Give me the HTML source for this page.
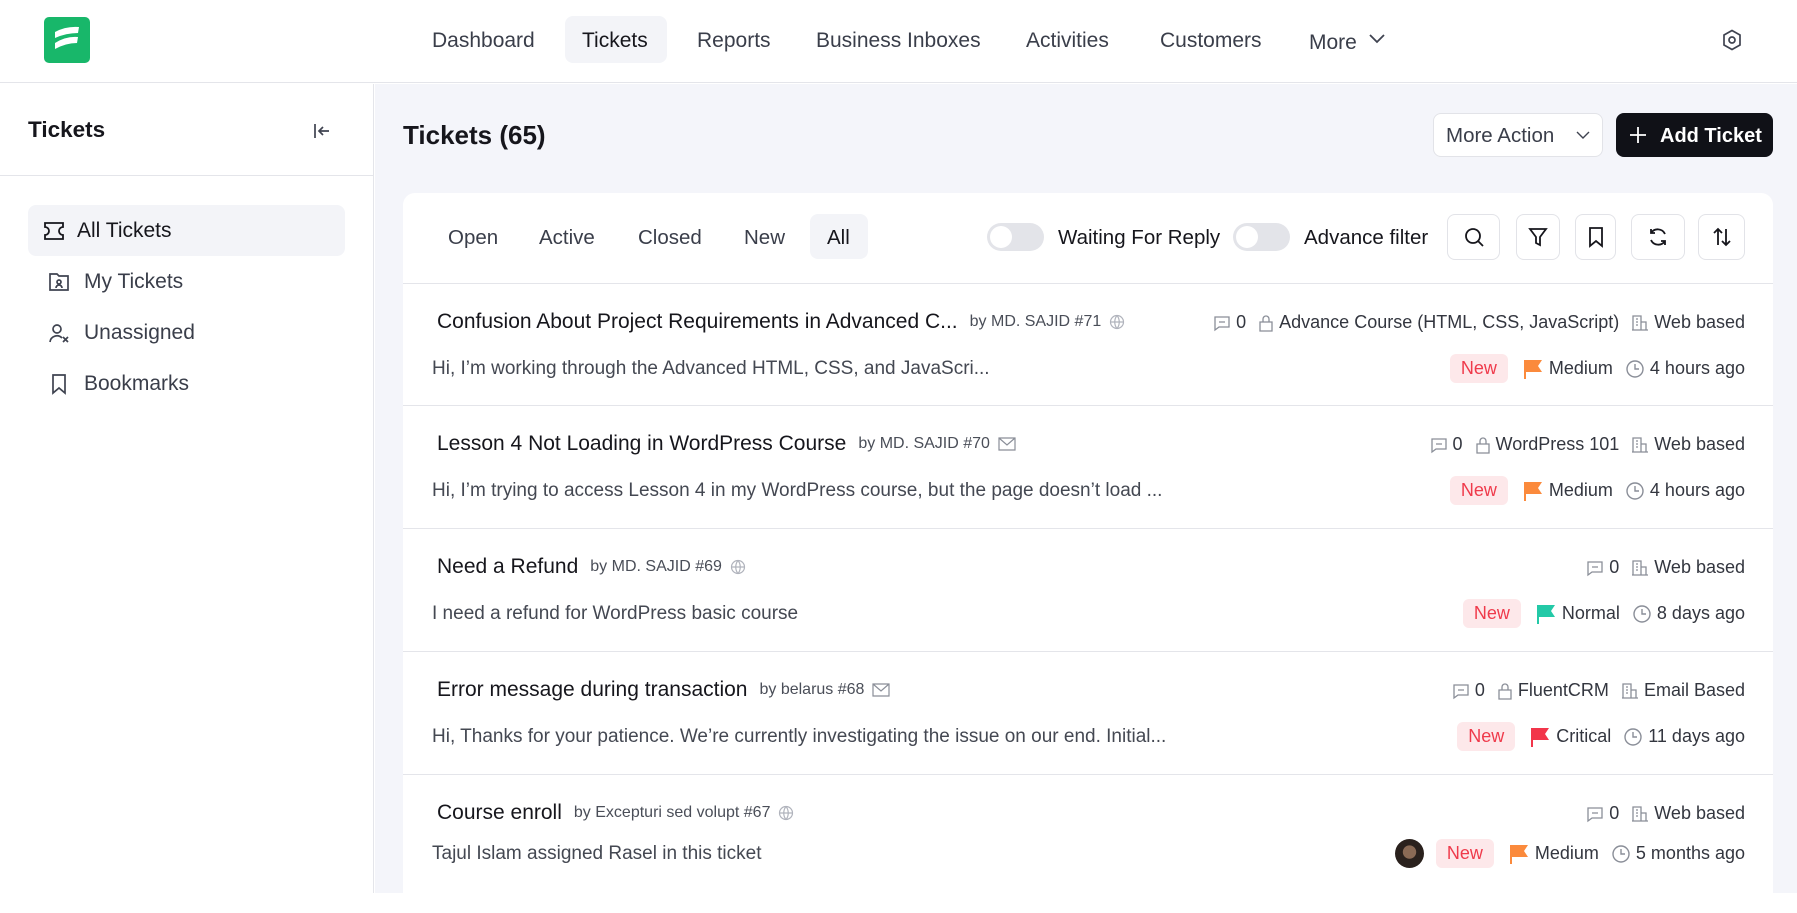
<!DOCTYPE html>
<html><head><meta charset="utf-8"><style>
*{box-sizing:border-box;margin:0;padding:0}
body{width:1797px;height:893px;overflow:hidden;font-family:"Liberation Sans",sans-serif;background:#fff;color:#1e1e24;position:relative}
.abs{position:absolute}
.hdr{left:0;top:0;width:1797px;height:83px;border-bottom:1px solid #e4e5ea;background:#fff}
.nav{top:16px;height:47px;line-height:49px;font-size:21px;color:#3a3e4a}
.side{left:0;top:84px;width:374px;height:809px;border-right:1px solid #e4e5ea;background:#fff}
.main{left:375px;top:84px;width:1422px;height:809px;background:#f4f5fa}
.si{left:28px;width:317px;height:51px;line-height:51px;font-size:21px;color:#3a3e4a;padding-left:49px;border-radius:8px}
.si svg{position:absolute;left:15px;top:15px}
.card{left:403px;top:193px;width:1370px;height:720px;background:#fff;border-radius:12px}
.tab{top:21px;height:45px;line-height:47px;font-size:20.5px;color:#3a3e4a}
.tog{width:57px;height:28px;border-radius:14px;background:#e3e4e9}
.tog:after{content:"";position:absolute;left:3px;top:3px;width:22px;height:22px;border-radius:50%;background:#fff}
.ib{top:21px;height:46px;border:1px solid #e2e3e8;border-radius:8px;display:flex;align-items:center;justify-content:center}
.row{left:0;width:1370px;height:123px;border-top:1px solid #e4e5ea}
.t{position:absolute;left:34px;top:26px;font-size:21px;color:#16161c;white-space:nowrap;display:flex;align-items:center}
.t small{font-size:16px;color:#4a4e58;margin-left:12px}
.t svg{margin-left:8px}
.d{position:absolute;left:29px;top:74px;font-size:19px;color:#444852;white-space:nowrap}
.m{position:absolute;right:28px;display:flex;align-items:center;font-size:18px;color:#33363f;white-space:nowrap}
.m1{top:28px}.m2{top:70px}
.m svg{margin-right:5px}
.gap{margin-right:12px}
.new{background:#fde8ea;color:#ef3a4b;border-radius:6px;padding:4px 11px;margin-right:14px}
</style></head><body>
<div class="abs hdr">
 <div class="abs" style="left:44px;top:17px;width:46px;height:46px;border-radius:5px;background:#18b76a">
  <svg width="46" height="46" viewBox="0 0 46 46"><path d="M11 15 Q22 9 35 10 L34 16 Q22 16 11 21Z M11 26 Q22 19 34 20 L33 26 Q22 26 11 32Z" fill="#fff"/></svg>
 </div>
 <div class="abs nav" style="left:432px">Dashboard</div>
 <div class="abs" style="left:565px;top:16px;width:102px;height:47px;background:#f3f4f8;border-radius:8px"></div>
 <div class="abs nav" style="left:582px;color:#16161c">Tickets</div>
 <div class="abs nav" style="left:697px">Reports</div>
 <div class="abs nav" style="left:816px">Business Inboxes</div>
 <div class="abs nav" style="left:1026px">Activities</div>
 <div class="abs nav" style="left:1160px">Customers</div>
 <div class="abs nav" style="left:1309px;top:18px">More</div>
 <svg class="abs" style="left:1368px;top:33px" width="18" height="12" viewBox="0 0 18 12"><path d="M2 2l7 7 7-7" fill="none" stroke="#3f4350" stroke-width="1.8"/></svg>
 <svg class="abs" style="left:1720px;top:28px" width="24" height="24" viewBox="0 0 24 24" fill="none" stroke="#3f4350" stroke-width="1.7"><path d="M12 2.5l8 4.5v10l-8 4.5-8-4.5V7z"/><circle cx="12" cy="12" r="3"/></svg>
</div>
<div class="abs side">
 <div class="abs" style="left:28px;top:33px;font-size:22.5px;font-weight:bold;color:#16161c">Tickets</div>
 <svg class="abs" style="left:312px;top:37px" width="20" height="20" viewBox="0 0 20 20" fill="none" stroke="#3f4350" stroke-width="1.7"><path d="M3 3v14M17 10H7M11 6l-4 4 4 4"/></svg>
 <div class="abs" style="left:0;top:91px;width:374px;height:1px;background:#e4e5ea"></div>
 <div class="abs si" style="top:121px;background:#f3f4f8;color:#16161c"><svg width="22" height="22" viewBox="0 0 22 22" fill="none" stroke="#16161c" stroke-width="1.8"><path d="M2 3h18v4a4 4 0 000 8v4H2v-4a4 4 0 000-8z"/></svg>All Tickets</div>
 <div class="abs si" style="top:172px;padding-left:56px"><svg style="left:20px" width="22" height="22" viewBox="0 0 22 22" fill="none" stroke="#3f4350" stroke-width="1.7"><path d="M2 3h7l2 2h9v14H2z"/><circle cx="11" cy="11" r="2"/><path d="M8 17a3 3 0 016 0"/></svg>My Tickets</div>
 <div class="abs si" style="top:223px;padding-left:56px"><svg style="left:20px" width="22" height="22" viewBox="0 0 22 22" fill="none" stroke="#3f4350" stroke-width="1.7"><circle cx="9" cy="7" r="4"/><path d="M2 20a7 7 0 0112-4M15 15l5 5M20 15l-5 5"/></svg>Unassigned</div>
 <div class="abs si" style="top:274px;padding-left:56px"><svg style="left:20px" width="22" height="22" viewBox="0 0 22 22" fill="none" stroke="#3f4350" stroke-width="1.7"><path d="M5 2h12v18l-6-5-6 5z"/></svg>Bookmarks</div>
</div>
<div class="abs main">
 <div class="abs" style="left:28px;top:36px;font-size:26px;font-weight:bold;color:#16161c">Tickets (65)</div>
 <div class="abs" style="left:1058px;top:29px;width:170px;height:44px;border:1px solid #e2e3e8;border-radius:8px;background:#fff;font-size:20.5px;color:#3a3e4a;line-height:44px;padding-left:12px">More Action<svg style="position:absolute;right:12px;top:17px" width="14" height="9" viewBox="0 0 14 9"><path d="M1 1l6 6 6-6" fill="none" stroke="#3f4350" stroke-width="1.4"/></svg></div>
 <div class="abs" style="left:1241px;top:29px;width:157px;height:44px;border-radius:8px;background:#101117;color:#fff;font-size:20px;font-weight:bold;line-height:46px;padding-left:44px;white-space:nowrap"><svg style="position:absolute;left:14px;top:14px" width="16" height="16" viewBox="0 0 16 16"><path d="M8 0v16M0 8h16" stroke="#fff" stroke-width="1.8"/></svg>Add Ticket</div>
</div>
<div class="abs card">
 <div class="abs tab" style="left:45px">Open</div>
 <div class="abs tab" style="left:136px">Active</div>
 <div class="abs tab" style="left:235px">Closed</div>
 <div class="abs tab" style="left:341px">New</div>
 <div class="abs" style="left:407px;top:21px;width:58px;height:45px;background:#f3f4f8;border-radius:8px"></div>
 <div class="abs tab" style="left:424px;color:#16161c">All</div>
 <div class="abs tog" style="left:584px;top:30px"></div>
 <div class="abs tab" style="left:655px;color:#16161c">Waiting For Reply</div>
 <div class="abs tog" style="left:830px;top:30px"></div>
 <div class="abs tab" style="left:901px;color:#16161c">Advance filter</div>
 <div class="abs ib" style="left:1044px;width:53px"><svg width="22" height="22" viewBox="0 0 22 22" fill="none" stroke="#16161c" stroke-width="1.8"><circle cx="10" cy="10" r="7"/><path d="M15 15l5 5"/></svg></div>
 <div class="abs ib" style="left:1113px;width:44px"><svg width="20" height="22" viewBox="0 0 20 22" fill="none" stroke="#16161c" stroke-width="1.8"><path d="M2 3h16l-6 8v8l-4-2v-6z"/></svg></div>
 <div class="abs ib" style="left:1172px;width:41px"><svg width="18" height="22" viewBox="0 0 18 22" fill="none" stroke="#16161c" stroke-width="1.8"><path d="M3 2h12v18l-6-5-6 5z"/></svg></div>
 <div class="abs ib" style="left:1228px;width:54px"><svg width="22" height="22" viewBox="0 0 22 22" fill="none" stroke="#16161c" stroke-width="1.8"><path d="M18 8A8 8 0 004 7M4 14a8 8 0 0014 1M4 3v4h4M18 19v-4h-4"/></svg></div>
 <div class="abs ib" style="left:1295px;width:47px"><svg width="22" height="22" viewBox="0 0 22 22" fill="none" stroke="#16161c" stroke-width="1.8"><path d="M7 19V3M3 7l4-4 4 4M15 3v16M11 15l4 4 4-4"/></svg></div>

 <div class="abs row" style="top:90px">
  <div class="t">Confusion About Project Requirements in Advanced C...<small>by MD. SAJID #71</small><svg width="16" height="16" viewBox="0 0 16 16" fill="none" stroke="#b0b3bc" stroke-width="1.2"><circle cx="8" cy="8" r="6.5"/><path d="M1.5 8h13M8 1.5c3 3.5 3 9.5 0 13M8 1.5c-3 3.5-3 9.5 0 13"/></svg></div>
  <div class="d">Hi, I’m working through the Advanced HTML, CSS, and JavaScri...</div>
  <div class="m m1"><svg width="18" height="18" viewBox="0 0 18 18" fill="none" stroke="#8a8e98" stroke-width="1.3"><path d="M2 3h14v10H6l-4 3z M6 8h6"/></svg><span class="gap">0</span><svg width="16" height="18" viewBox="0 0 16 18" fill="none" stroke="#8a8e98" stroke-width="1.3"><path d="M2 8h12v9H2z M5 8V5a3 3 0 016 0v3"/></svg><span class="gap">Advance Course (HTML, CSS, JavaScript)</span><svg width="18" height="18" viewBox="0 0 18 18" fill="none" stroke="#8a8e98" stroke-width="1.3"><path d="M2 16V2h8v14M10 8h5v8M1 16h16M5 5h2M5 8h2M5 11h2"/></svg>Web based</div>
  <div class="m m2"><span class="new">New</span><svg width="22" height="20" viewBox="0 0 22 20"><path d="M2 1h18l-4 6 4 6H4v7H2z" fill="#fb8a3c"/></svg><span class="gap">Medium</span><svg width="20" height="20" viewBox="0 0 20 20" fill="none" stroke="#8a8e98" stroke-width="1.4"><circle cx="10" cy="10" r="8"/><path d="M10 5v5h4"/></svg>4 hours ago</div>
 </div>
 <div class="abs row" style="top:212px">
  <div class="t">Lesson 4 Not Loading in WordPress Course<small>by MD. SAJID #70</small><svg width="18" height="16" viewBox="0 0 18 16" fill="none" stroke="#8a8e98" stroke-width="1.2"><path d="M1 2h16v12H1z M1 2l8 7 8-7"/></svg></div>
  <div class="d">Hi, I’m trying to access Lesson 4 in my WordPress course, but the page doesn’t load ...</div>
  <div class="m m1"><svg width="18" height="18" viewBox="0 0 18 18" fill="none" stroke="#8a8e98" stroke-width="1.3"><path d="M2 3h14v10H6l-4 3z M6 8h6"/></svg><span class="gap">0</span><svg width="16" height="18" viewBox="0 0 16 18" fill="none" stroke="#8a8e98" stroke-width="1.3"><path d="M2 8h12v9H2z M5 8V5a3 3 0 016 0v3"/></svg><span class="gap">WordPress 101</span><svg width="18" height="18" viewBox="0 0 18 18" fill="none" stroke="#8a8e98" stroke-width="1.3"><path d="M2 16V2h8v14M10 8h5v8M1 16h16M5 5h2M5 8h2M5 11h2"/></svg>Web based</div>
  <div class="m m2"><span class="new">New</span><svg width="22" height="20" viewBox="0 0 22 20"><path d="M2 1h18l-4 6 4 6H4v7H2z" fill="#fb8a3c"/></svg><span class="gap">Medium</span><svg width="20" height="20" viewBox="0 0 20 20" fill="none" stroke="#8a8e98" stroke-width="1.4"><circle cx="10" cy="10" r="8"/><path d="M10 5v5h4"/></svg>4 hours ago</div>
 </div>
 <div class="abs row" style="top:335px">
  <div class="t">Need a Refund<small>by MD. SAJID #69</small><svg width="16" height="16" viewBox="0 0 16 16" fill="none" stroke="#b0b3bc" stroke-width="1.2"><circle cx="8" cy="8" r="6.5"/><path d="M1.5 8h13M8 1.5c3 3.5 3 9.5 0 13M8 1.5c-3 3.5-3 9.5 0 13"/></svg></div>
  <div class="d">I need a refund for WordPress basic course</div>
  <div class="m m1"><svg width="18" height="18" viewBox="0 0 18 18" fill="none" stroke="#8a8e98" stroke-width="1.3"><path d="M2 3h14v10H6l-4 3z M6 8h6"/></svg><span class="gap">0</span><svg width="18" height="18" viewBox="0 0 18 18" fill="none" stroke="#8a8e98" stroke-width="1.3"><path d="M2 16V2h8v14M10 8h5v8M1 16h16M5 5h2M5 8h2M5 11h2"/></svg>Web based</div>
  <div class="m m2"><span class="new">New</span><svg width="22" height="20" viewBox="0 0 22 20"><path d="M2 1h18l-4 6 4 6H4v7H2z" fill="#23c9a7"/></svg><span class="gap">Normal</span><svg width="20" height="20" viewBox="0 0 20 20" fill="none" stroke="#8a8e98" stroke-width="1.4"><circle cx="10" cy="10" r="8"/><path d="M10 5v5h4"/></svg>8 days ago</div>
 </div>
 <div class="abs row" style="top:458px">
  <div class="t">Error message during transaction<small>by belarus #68</small><svg width="18" height="16" viewBox="0 0 18 16" fill="none" stroke="#8a8e98" stroke-width="1.2"><path d="M1 2h16v12H1z M1 2l8 7 8-7"/></svg></div>
  <div class="d">Hi, Thanks for your patience. We’re currently investigating the issue on our end. Initial...</div>
  <div class="m m1"><svg width="18" height="18" viewBox="0 0 18 18" fill="none" stroke="#8a8e98" stroke-width="1.3"><path d="M2 3h14v10H6l-4 3z M6 8h6"/></svg><span class="gap">0</span><svg width="16" height="18" viewBox="0 0 16 18" fill="none" stroke="#8a8e98" stroke-width="1.3"><path d="M2 8h12v9H2z M5 8V5a3 3 0 016 0v3"/></svg><span class="gap">FluentCRM</span><svg width="18" height="18" viewBox="0 0 18 18" fill="none" stroke="#8a8e98" stroke-width="1.3"><path d="M2 16V2h8v14M10 8h5v8M1 16h16M5 5h2M5 8h2M5 11h2"/></svg>Email Based</div>
  <div class="m m2"><span class="new">New</span><svg width="22" height="20" viewBox="0 0 22 20"><path d="M2 1h18l-4 6 4 6H4v7H2z" fill="#f2354a"/></svg><span class="gap">Critical</span><svg width="20" height="20" viewBox="0 0 20 20" fill="none" stroke="#8a8e98" stroke-width="1.4"><circle cx="10" cy="10" r="8"/><path d="M10 5v5h4"/></svg>11 days ago</div>
 </div>
 <div class="abs row" style="top:581px">
  <div class="t">Course enroll<small>by Excepturi sed volupt #67</small><svg width="16" height="16" viewBox="0 0 16 16" fill="none" stroke="#b0b3bc" stroke-width="1.2"><circle cx="8" cy="8" r="6.5"/><path d="M1.5 8h13M8 1.5c3 3.5 3 9.5 0 13M8 1.5c-3 3.5-3 9.5 0 13"/></svg></div>
  <div class="d" style="top:68px">Tajul Islam assigned Rasel in this ticket</div>
  <div class="m m1"><svg width="18" height="18" viewBox="0 0 18 18" fill="none" stroke="#8a8e98" stroke-width="1.3"><path d="M2 3h14v10H6l-4 3z M6 8h6"/></svg><span class="gap">0</span><svg width="18" height="18" viewBox="0 0 18 18" fill="none" stroke="#8a8e98" stroke-width="1.3"><path d="M2 16V2h8v14M10 8h5v8M1 16h16M5 5h2M5 8h2M5 11h2"/></svg>Web based</div>
  <div class="m m2" style="top:64px"><span style="width:29px;height:29px;border-radius:50%;background:radial-gradient(circle at 50% 45%,#8a6a55 0 30%,#2a211d 32%);margin-right:12px;display:inline-block"></span><span class="new">New</span><svg width="22" height="20" viewBox="0 0 22 20"><path d="M2 1h18l-4 6 4 6H4v7H2z" fill="#fb8a3c"/></svg><span class="gap">Medium</span><svg width="20" height="20" viewBox="0 0 20 20" fill="none" stroke="#8a8e98" stroke-width="1.4"><circle cx="10" cy="10" r="8"/><path d="M10 5v5h4"/></svg>5 months ago</div>
 </div>
</div>
</body></html>
